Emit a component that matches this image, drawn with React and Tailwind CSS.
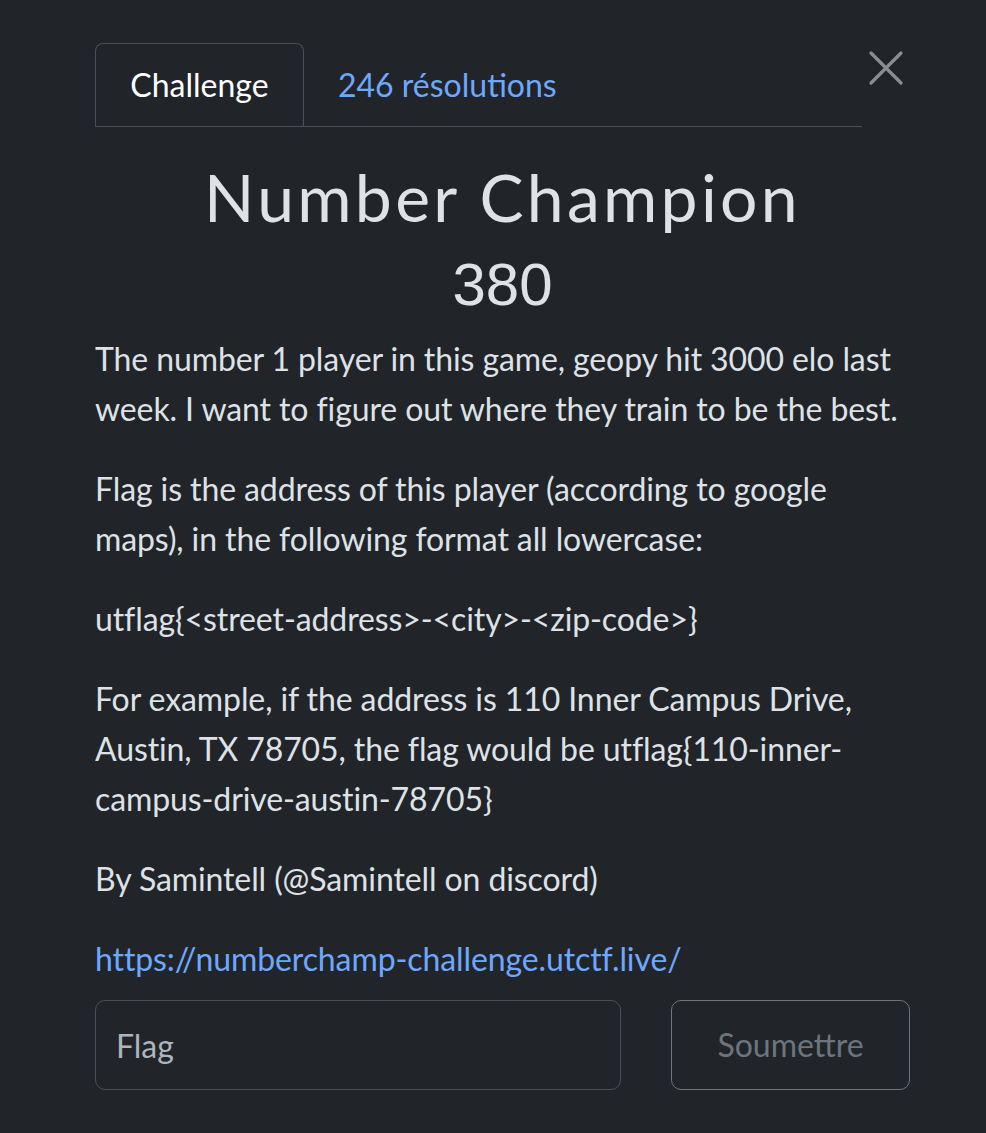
import React from 'react';

const ChallengeModal = () => {
  return (
    <div className="min-h-screen bg-[#212529] text-[#dee2e6] font-['Lato',sans-serif]">
      <div className="pl-[95px] pr-[76px] pt-[43px]">
        {/* Tabs + close */}
        <div className="flex items-start">
          <div className="flex flex-1 border-b border-[#495057]">
            <div className="-mb-px w-[209px] h-[83px] flex items-center justify-center rounded-t-[8px] border border-b-0 border-[#495057] bg-[#212529] text-[32px] text-white">
              Challenge
            </div>
            <div className="h-[83px] flex items-center pl-[34px] text-[32px] text-[#6ea8fe]">
              246 résolutions
            </div>
          </div>
          <button className="w-[48px] h-[48px] mt-[1px] flex items-center justify-center text-[#8a8d91]">
            <svg width="36" height="36" viewBox="0 0 36 36" fill="none" stroke="currentColor" strokeWidth="3.2" strokeLinecap="round">
              <path d="M3 3 L33 33 M33 3 L3 33" />
            </svg>
          </button>
        </div>

        {/* Title */}
        <div className="text-center">
          <h1 className="mt-[30px] text-[66px] leading-[80px] tracking-[3.3px] text-[#dee2e6]">Number Champion</h1>
          <div className="mt-[16px] text-[60px] leading-[64px] font-['Liberation_Sans',sans-serif] text-[#dee2e6]">380</div>
        </div>

        {/* Description */}
        <div className="mt-[17px] text-[32px] leading-[50px] tracking-[-0.1px]">
          <p>The number 1 player in this game, geopy hit 3000 elo last week. I want to figure out where they train to be the best.</p>
          <p className="mt-[30px]">Flag is the address of this player (according to google maps), in the following format all lowercase:</p>
          <p className="mt-[30px]">utflag{'{'}&lt;street-address&gt;-&lt;city&gt;-&lt;zip-code&gt;{'}'}</p>
          <p className="mt-[30px]">For example, if the address is 110 Inner Campus Drive, Austin, TX 78705, the flag would be utflag{'{'}110-inner-campus-drive-austin-78705{'}'}</p>
          <p className="mt-[30px]">By Samintell (@Samintell on discord)</p>
          <p className="mt-[30px]">
            <a className="text-[#6ea8fe]">https://numberchamp-challenge.utctf.live/</a>
          </p>
        </div>

        {/* Flag form */}
        <div className="mt-[16px] flex gap-[50px]">
          <input
            placeholder="Flag"
            className="flex-1 min-w-0 h-[90px] rounded-[10px] border border-[#495057] bg-transparent px-[20px] text-[32px] text-[#dee2e6] placeholder:text-[#adb5bd] outline-none"
          />
          <button className="w-[239px] h-[90px] rounded-[10px] border border-[#6c757d] text-[32px] text-[#6c757d]">
            Soumettre
          </button>
        </div>
      </div>
    </div>
  );
};

export default function App() {
  return <ChallengeModal />;
}
